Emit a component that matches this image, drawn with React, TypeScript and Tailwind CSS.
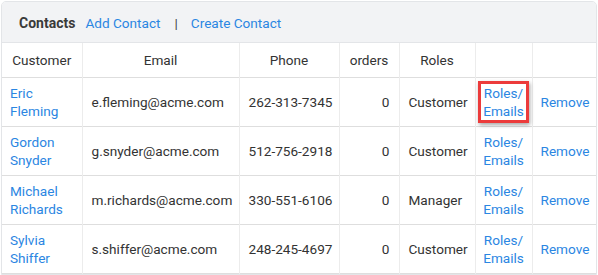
import React from "react";

type Contact = {
  first: string;
  last: string;
  email: string;
  phone: string;
  orders: number;
  role: string;
};

const contacts: Contact[] = [
  { first: "Eric", last: "Fleming", email: "e.fleming@acme.com", phone: "262-313-7345", orders: 0, role: "Customer" },
  { first: "Gordon", last: "Snyder", email: "g.snyder@acme.com", phone: "512-756-2918", orders: 0, role: "Customer" },
  { first: "Michael", last: "Richards", email: "m.richards@acme.com", phone: "330-551-6106", orders: 0, role: "Manager" },
  { first: "Sylvia", last: "Shiffer", email: "s.shiffer@acme.com", phone: "248-245-4697", orders: 0, role: "Customer" },
];

export default function App() {
  return (
    <div
      className="w-[598px] h-[275px] bg-white pl-px pt-px text-[13.6px] leading-[18px] text-[#333]"
      style={{ fontFamily: "Roboto, 'Liberation Sans', sans-serif" }}
    >
      {/* Card */}
      <div className="w-[596px] rounded-t-[5px] border border-[#e3e5e8] overflow-hidden">
        {/* Card header */}
        <div className="h-[41px] bg-[#f2f3f5] border-b border-[#e3e5e8] flex items-center pl-[17px] pt-px">
          <span className="font-bold text-[14px] text-[#3a3a3a]">Contacts</span>
          <a className="ml-[10px] text-[#2b86e2]">Add Contact</a>
          <span className="ml-[14px] text-[#444]">|</span>
          <a className="ml-[13px] text-[#2b86e2]">Create Contact</a>
        </div>

        {/* Contacts table */}
        <table className="w-full table-fixed border-collapse">
          <colgroup>
            <col className="w-[80px]" />
            <col className="w-[157px]" />
            <col className="w-[100px]" />
            <col className="w-[60px]" />
            <col className="w-[76px]" />
            <col className="w-[57px]" />
            <col />
          </colgroup>
          <thead>
            <tr className="h-[34px] border-b border-[#dedede]">
              <th className="font-normal text-center border-r border-[#ececec]">Customer</th>
              <th className="font-normal text-center border-r border-[#ececec]">Email</th>
              <th className="font-normal text-center border-r border-[#ececec]">Phone</th>
              <th className="font-normal text-center border-r border-[#ececec]">orders</th>
              <th className="font-normal text-center border-r border-[#ececec]">Roles</th>
              <th className="font-normal border-r border-[#ececec]"></th>
              <th className="font-normal"></th>
            </tr>
          </thead>
          <tbody>
            {contacts.map((c, i) => (
              <tr key={c.email} className="h-[49px] border-b border-[#dedede]">
                <td className="px-[8px] border-r border-[#ececec] text-[#2b86e2]">
                  {c.first}
                  <br />
                  {c.last}
                </td>
                <td className="px-[9px] border-r border-[#ececec] whitespace-nowrap">{c.email}</td>
                <td className="px-[9px] border-r border-[#ececec] whitespace-nowrap">{c.phone}</td>
                <td className="px-[9px] text-right border-r border-[#ececec]">{c.orders}</td>
                <td className="px-[9px] border-r border-[#ececec]">{c.role}</td>
                <td className="text-center border-r border-[#ececec]">
                  {i === 0 ? (
                    <a className="inline-block border-[3px] border-[#ec3b3b] px-[2px] text-[#2b86e2] shadow-[1px_2px_4px_rgba(0,0,0,0.35)]">
                      Roles/
                      <br />
                      Emails
                    </a>
                  ) : (
                    <a className="text-[#2b86e2]">
                      Roles/
                      <br />
                      Emails
                    </a>
                  )}
                </td>
                <td className="px-[8px] text-[#2b86e2]">Remove</td>
              </tr>
            ))}
          </tbody>
        </table>
      </div>
    </div>
  );
}
